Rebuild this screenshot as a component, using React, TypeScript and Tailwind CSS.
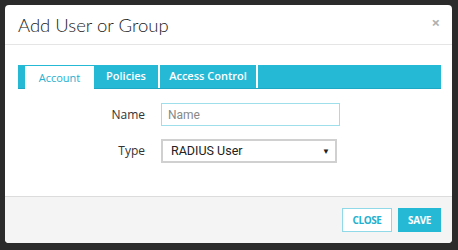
import React from "react";

export default function App() {
  const tabs = [
    { label: "Account", width: "w-[69px]", active: true },
    { label: "Policies", width: "w-[66px]", active: false },
    { label: "Access Control", width: "w-[98px]", active: false },
  ];
  return (
    <div className="w-[458px] h-[250px] bg-[#2b2b2b] pl-[5px] pt-[5px] font-['Open_Sans',sans-serif]">
      <div className="w-[447px] h-[238px] bg-white rounded-[4px] flex flex-col overflow-hidden">
        {/* Header */}
        <div className="h-[40px] border-b border-[#e5e5e5] flex items-center justify-between pl-[13px] pr-[12px] shrink-0">
          <span className="text-[18.5px] font-light text-[#222] leading-none font-['Lato',sans-serif] pt-[1px]">
            Add User or Group
          </span>
          <span className="text-[#b0b0b0] text-[15px] font-bold leading-none -mt-[4px]">×</span>
        </div>

        {/* Body */}
        <div className="flex-1 pt-[20px] pl-[13px] pr-[11px]">
          <div className="h-[24px] bg-[#26b9d6] border-b border-[#1ea8c4] flex pl-[7px]">
            {tabs.map((t, i) => (
              <div
                key={i}
                className={
                  t.active
                    ? `${t.width} h-[24px] bg-white flex items-center justify-center text-[11px] text-[#26b0cf] mt-[1px]`
                    : `${t.width} h-full flex items-center justify-center text-[11px] font-semibold text-white border-r-2 border-white`
                }
              >
                {t.label}
              </div>
            ))}
          </div>

          <div className="flex items-center mt-[14px]">
            <span className="w-[127px] text-right text-[12px] text-[#333]">Name</span>
            <input
              placeholder="Name"
              className="ml-[16px] w-[179px] h-[23px] border border-[#9fdfec] px-[6px] text-[12px] font-['Roboto',sans-serif] placeholder:text-[#888] outline-none"
            />
          </div>

          <div className="flex items-center mt-[13px]">
            <span className="w-[127px] text-right text-[12px] text-[#333]">Type</span>
            <div className="ml-[16px] w-[176px] h-[24px] border-2 border-[#d0d0d0] flex items-center justify-between pl-[8px] pr-[5px]">
              <span className="text-[12.5px] text-[#222] font-['Roboto',sans-serif]">RADIUS User</span>
              <span className="text-[8px] text-[#222]">▼</span>
            </div>
          </div>
        </div>

        {/* Footer */}
        <div className="h-[47px] border-t border-[#dcdcdc] bg-[#f4f4f4] flex items-center justify-end gap-[6px] pr-[11px] shrink-0">
          <button className="w-[50px] h-[24px] bg-white border border-[#8fd9e9] text-[#26b0cf] text-[10px] font-bold tracking-[-0.4px]">
            CLOSE
          </button>
          <button className="w-[43px] h-[24px] bg-[#26b9d6] text-white text-[10px] font-bold tracking-[-0.4px]">
            SAVE
          </button>
        </div>
      </div>
    </div>
  );
}
